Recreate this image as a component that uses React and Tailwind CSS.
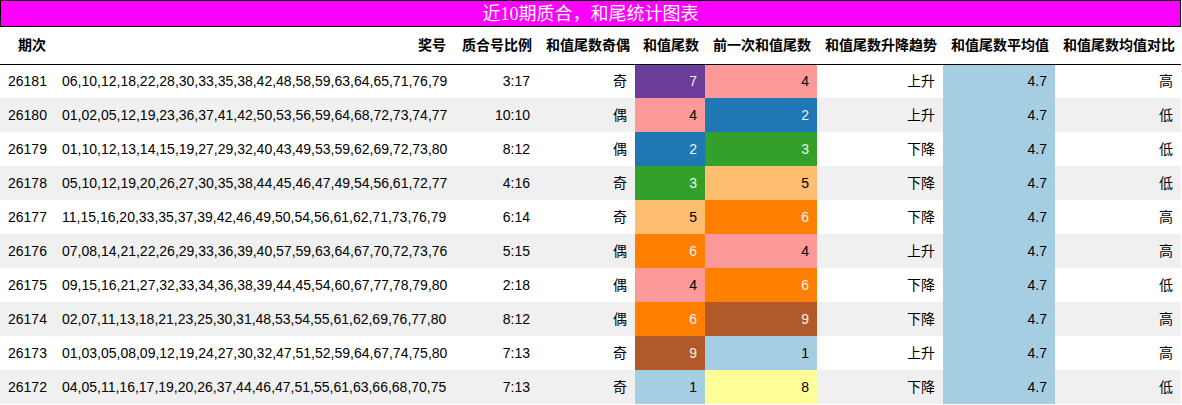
import React from "react";

const rows = [
  ["26181", "06,10,12,18,22,28,30,33,35,38,42,48,58,59,63,64,65,71,76,79", "3:17", "奇", 7, 4, "上升", "4.7", "高"],
  ["26180", "01,02,05,12,19,23,36,37,41,42,50,53,56,59,64,68,72,73,74,77", "10:10", "偶", 4, 2, "上升", "4.7", "低"],
  ["26179", "01,10,12,13,14,15,19,27,29,32,40,43,49,53,59,62,69,72,73,80", "8:12", "偶", 2, 3, "下降", "4.7", "低"],
  ["26178", "05,10,12,19,20,26,27,30,35,38,44,45,46,47,49,54,56,61,72,77", "4:16", "奇", 3, 5, "下降", "4.7", "低"],
  ["26177", "11,15,16,20,33,35,37,39,42,46,49,50,54,56,61,62,71,73,76,79", "6:14", "奇", 5, 6, "下降", "4.7", "高"],
  ["26176", "07,08,14,21,22,26,29,33,36,39,40,57,59,63,64,67,70,72,73,76", "5:15", "偶", 6, 4, "上升", "4.7", "高"],
  ["26175", "09,15,16,21,27,32,33,34,36,38,39,44,45,54,60,67,77,78,79,80", "2:18", "偶", 4, 6, "下降", "4.7", "低"],
  ["26174", "02,07,11,13,18,21,23,25,30,31,48,53,54,55,61,62,69,76,77,80", "8:12", "偶", 6, 9, "下降", "4.7", "高"],
  ["26173", "01,03,05,08,09,12,19,24,27,30,32,47,51,52,59,64,67,74,75,80", "7:13", "奇", 9, 1, "上升", "4.7", "高"],
  ["26172", "04,05,11,16,17,19,20,26,37,44,46,47,51,55,61,63,66,68,70,75", "7:13", "奇", 1, 8, "下降", "4.7", "低"],
];

// colour for each tail digit
const tailStyle = {
  1: "bg-[#a6cee3] text-black",
  2: "bg-[#1f78b4] text-[#f1f1f1]",
  3: "bg-[#33a02c] text-[#f1f1f1]",
  4: "bg-[#fb9a99] text-black",
  5: "bg-[#fdbf6f] text-black",
  6: "bg-[#ff7f00] text-[#f1f1f1]",
  7: "bg-[#6a3d9a] text-[#f1f1f1]",
  8: "bg-[#ffff99] text-black",
  9: "bg-[#b15928] text-[#f1f1f1]",
};

const headers = ["期次", "奖号", "质合号比例", "和值尾数奇偶", "和值尾数", "前一次和值尾数", "和值尾数升降趋势", "和值尾数平均值", "和值尾数均值对比"];

export default function App() {
  return (
    <div className="w-[1182px] h-[405px] bg-white overflow-hidden font-['Liberation_Sans','Noto_Sans_CJK_SC',sans-serif] text-[14px] text-black">
      <div className="w-[1181px] h-[27px] border border-black bg-[#ff00ff] flex items-center justify-center text-white text-[18px] leading-none font-['Liberation_Serif','Noto_Sans_CJK_SC',serif]">
        近10期质合，和尾统计图表
      </div>
      <table className="w-[1181px] table-fixed border-collapse">
        <colgroup>
          <col className="w-[54px]" />
          <col className="w-[400px]" />
          <col className="w-[84px]" />
          <col className="w-[97px]" />
          <col className="w-[70px]" />
          <col className="w-[112px]" />
          <col className="w-[126px]" />
          <col className="w-[112px]" />
          <col className="w-[126px]" />
        </colgroup>
        <thead>
          <tr className="h-[37px] border-b border-black">
            {headers.map((h) => (
              <th key={h} className="px-2 py-0 text-right font-bold whitespace-nowrap">
                {h}
              </th>
            ))}
          </tr>
        </thead>
        <tbody>
          {rows.map((r, i) => (
            <tr key={r[0]} className={`h-[34px] ${i % 2 === 0 ? "bg-white" : "bg-[#f0f0f0]"}`}>
              <td className="px-2 py-0 text-right">{r[0]}</td>
              <td className="px-2 py-0 text-right whitespace-nowrap">{r[1]}</td>
              <td className="px-2 py-0 text-right">{r[2]}</td>
              <td className="px-2 py-0 text-right">{r[3]}</td>
              <td className={`px-2 py-0 text-right ${tailStyle[r[4]]}`}>{r[4]}</td>
              <td className={`px-2 py-0 text-right ${tailStyle[r[5]]}`}>{r[5]}</td>
              <td className="px-2 py-0 text-right">{r[6]}</td>
              <td className="px-2 py-0 text-right bg-[#a6cee3]">{r[7]}</td>
              <td className="px-2 py-0 text-right">{r[8]}</td>
            </tr>
          ))}
        </tbody>
      </table>
    </div>
  );
}
